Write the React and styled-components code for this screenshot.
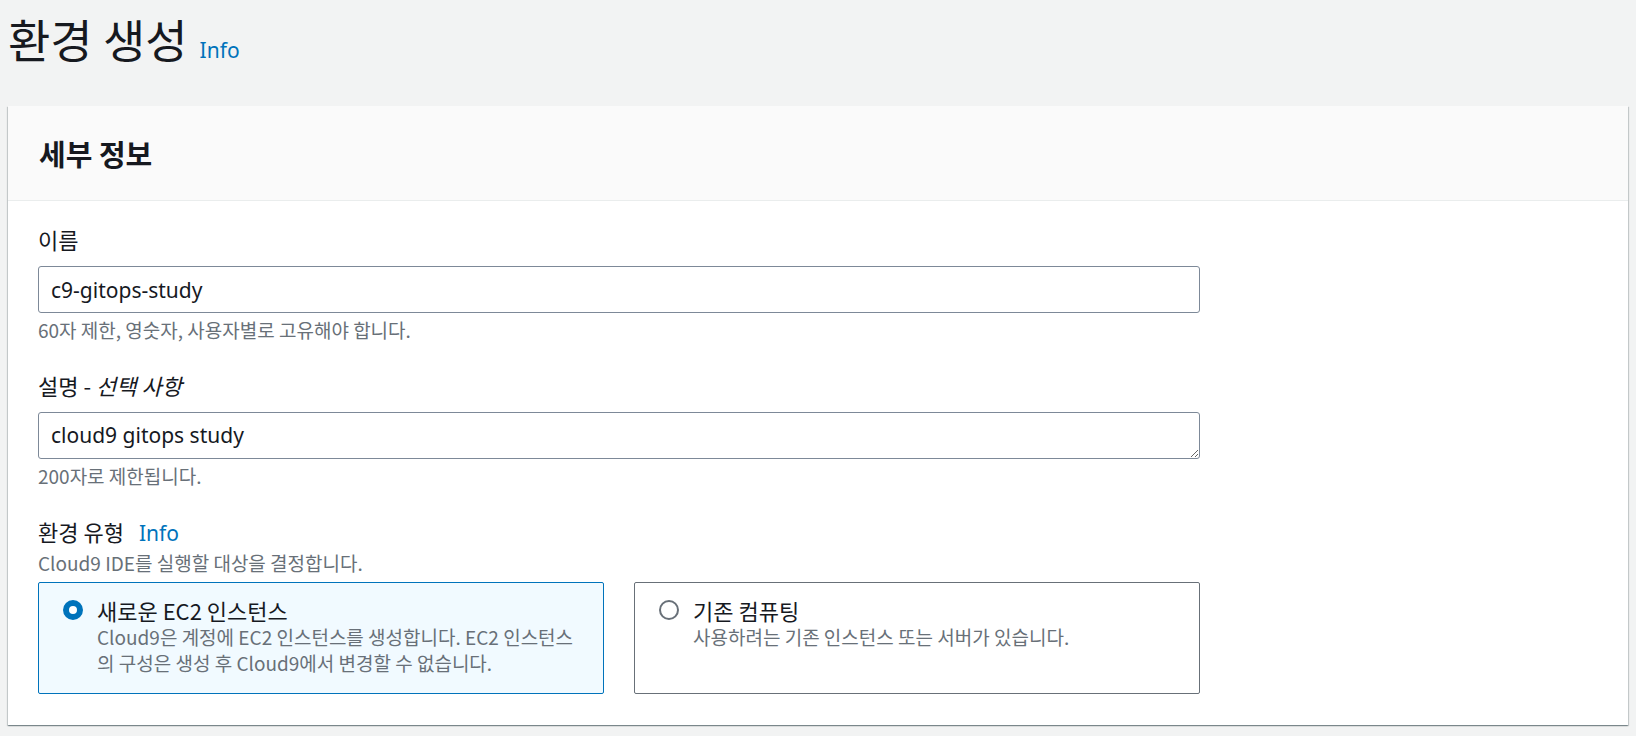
import React, { useState } from 'react';
import styled, { createGlobalStyle } from 'styled-components';

const GlobalStyle = createGlobalStyle`
  html, body {
    margin: 0;
    padding: 0;
    background: #f2f3f3;
  }
  body {
    font-family: "Noto Sans CJK KR", "Noto Sans", sans-serif;
    color: #16191f;
  }
`;

const Page = styled.div`
  padding: 10px 8px 12px 8px;
`;

const TitleRow = styled.div`
  display: flex;
  align-items: baseline;
  gap: 12px;
  margin-bottom: 40px;
`;

const Title = styled.h1`
  margin: 0;
  font-size: 46px;
  line-height: 56px;
  font-weight: 400;
  color: #16191f;
`;

const InfoLink = styled.a`
  font-family: "Noto Sans", "Noto Sans CJK KR", sans-serif;
  font-size: 21px;
  color: #0073bb;
  text-decoration: none;
  margin-left: ${p => (p.$inLabel ? '15px' : '0')};
`;

const Panel = styled.section`
  background: #fff;
  box-shadow: 0 1px 1px 0 rgba(0, 28, 36, 0.3), 1px 1px 1px 0 rgba(0, 28, 36, 0.15),
    -1px 1px 1px 0 rgba(0, 28, 36, 0.15);
`;

const PanelHeader = styled.div`
  background: #fafafa;
  border-bottom: 1px solid #eaeded;
  padding: 31px 31px 30px;
`;

const PanelTitle = styled.h2`
  margin: 0;
  font-size: 29px;
  line-height: 33px;
  font-weight: 700;
  color: #16191f;
`;

const PanelBody = styled.div`
  padding: 22px 30px 31px 30px;
  display: flex;
  flex-direction: column;
  gap: 27px;
`;

const Field = styled.div`
  max-width: 1162px;
  display: flex;
  flex-direction: column;
`;

const Label = styled.label`
  font-size: 22px;
  line-height: 33px;
  color: #16191f;
  margin-bottom: ${p => (p.$tight ? '0' : '10px')};
  display: flex;
  align-items: baseline;
  em {
    font-style: italic;
  }
`;

const Hint = styled.div`
  font-size: 19px;
  line-height: 25px;
  color: #687078;
  margin-top: ${p => (p.$top ? '4px' : '0')};
  margin-bottom: ${p => (p.$bottom ? '7px' : '0')};
`;

const TextInput = styled.input`
  box-sizing: border-box;
  width: 100%;
  height: 47px;
  border: 1px solid #7d8998;
  border-radius: 3px;
  padding: 0 12px;
  font-family: "Noto Sans", "Noto Sans CJK KR", sans-serif;
  font-size: 21px;
  color: #16191f;
  background: #fff;
  outline: none;
`;

const TextArea = styled.textarea`
  box-sizing: border-box;
  width: 100%;
  height: 47px;
  border: 1px solid #7d8998;
  border-radius: 3px;
  padding: 7px 12px;
  font-family: "Noto Sans", "Noto Sans CJK KR", sans-serif;
  font-size: 21px;
  line-height: 30px;
  color: #16191f;
  background: #fff;
  resize: vertical;
  outline: none;
  display: block;
`;

const Tiles = styled.div`
  display: grid;
  grid-template-columns: 1fr 1fr;
  gap: 30px;
`;

const Tile = styled.div`
  box-sizing: border-box;
  min-height: 112px;
  border: 1px solid ${p => (p.$selected ? '#0073bb' : '#687078')};
  background: ${p => (p.$selected ? '#f1faff' : '#fff')};
  border-radius: 2px;
  padding: 13px 20px 13px 24px;
  display: flex;
  gap: 14px;
  cursor: pointer;
`;

const Radio = styled.span`
  flex: none;
  box-sizing: border-box;
  width: 20px;
  height: 20px;
  margin-top: 4px;
  border-radius: 50%;
  border: ${p => (p.$checked ? '6px solid #0073bb' : '2px solid #687078')};
  background: #fff;
`;

const TileText = styled.div`
  display: flex;
  flex-direction: column;
`;

const TileTitle = styled.div`
  font-size: 22px;
  line-height: 28px;
  color: #16191f;
`;

const TileDesc = styled.div`
  font-size: 19px;
  line-height: 26px;
  color: #687078;
`;

const options = [
  {
    id: 'ec2',
    title: '새로운 EC2 인스턴스',
    desc: 'Cloud9은 계정에 EC2 인스턴스를 생성합니다. EC2 인스턴스의 구성은 생성 후 Cloud9에서 변경할 수 없습니다.',
  },
  {
    id: 'ssh',
    title: '기존 컴퓨팅',
    desc: '사용하려는 기존 인스턴스 또는 서버가 있습니다.',
  },
];

export default function App() {
  const [envType, setEnvType] = useState('ec2');

  return (
    <Page>
      <GlobalStyle />
      <TitleRow>
        <Title>환경 생성</Title>
        <InfoLink href="#">Info</InfoLink>
      </TitleRow>
      <Panel>
        <PanelHeader>
          <PanelTitle>세부 정보</PanelTitle>
        </PanelHeader>
        <PanelBody>
          <Field>
            <Label>이름</Label>
            <TextInput defaultValue="c9-gitops-study" />
            <Hint $top>60자 제한, 영숫자, 사용자별로 고유해야 합니다.</Hint>
          </Field>
          <Field>
            <Label>
              설명 -&nbsp;<em>선택 사항</em>
            </Label>
            <TextArea defaultValue="cloud9 gitops study" />
            <Hint $top>200자로 제한됩니다.</Hint>
          </Field>
          <Field>
            <Label $tight>
              환경 유형
              <InfoLink href="#" $inLabel>
                Info
              </InfoLink>
            </Label>
            <Hint $bottom>Cloud9 IDE를 실행할 대상을 결정합니다.</Hint>
            <Tiles>
              {options.map(o => (
                <Tile key={o.id} $selected={envType === o.id} onClick={() => setEnvType(o.id)}>
                  <Radio $checked={envType === o.id} />
                  <TileText>
                    <TileTitle>{o.title}</TileTitle>
                    <TileDesc>{o.desc}</TileDesc>
                  </TileText>
                </Tile>
              ))}
            </Tiles>
          </Field>
        </PanelBody>
      </Panel>
    </Page>
  );
}
